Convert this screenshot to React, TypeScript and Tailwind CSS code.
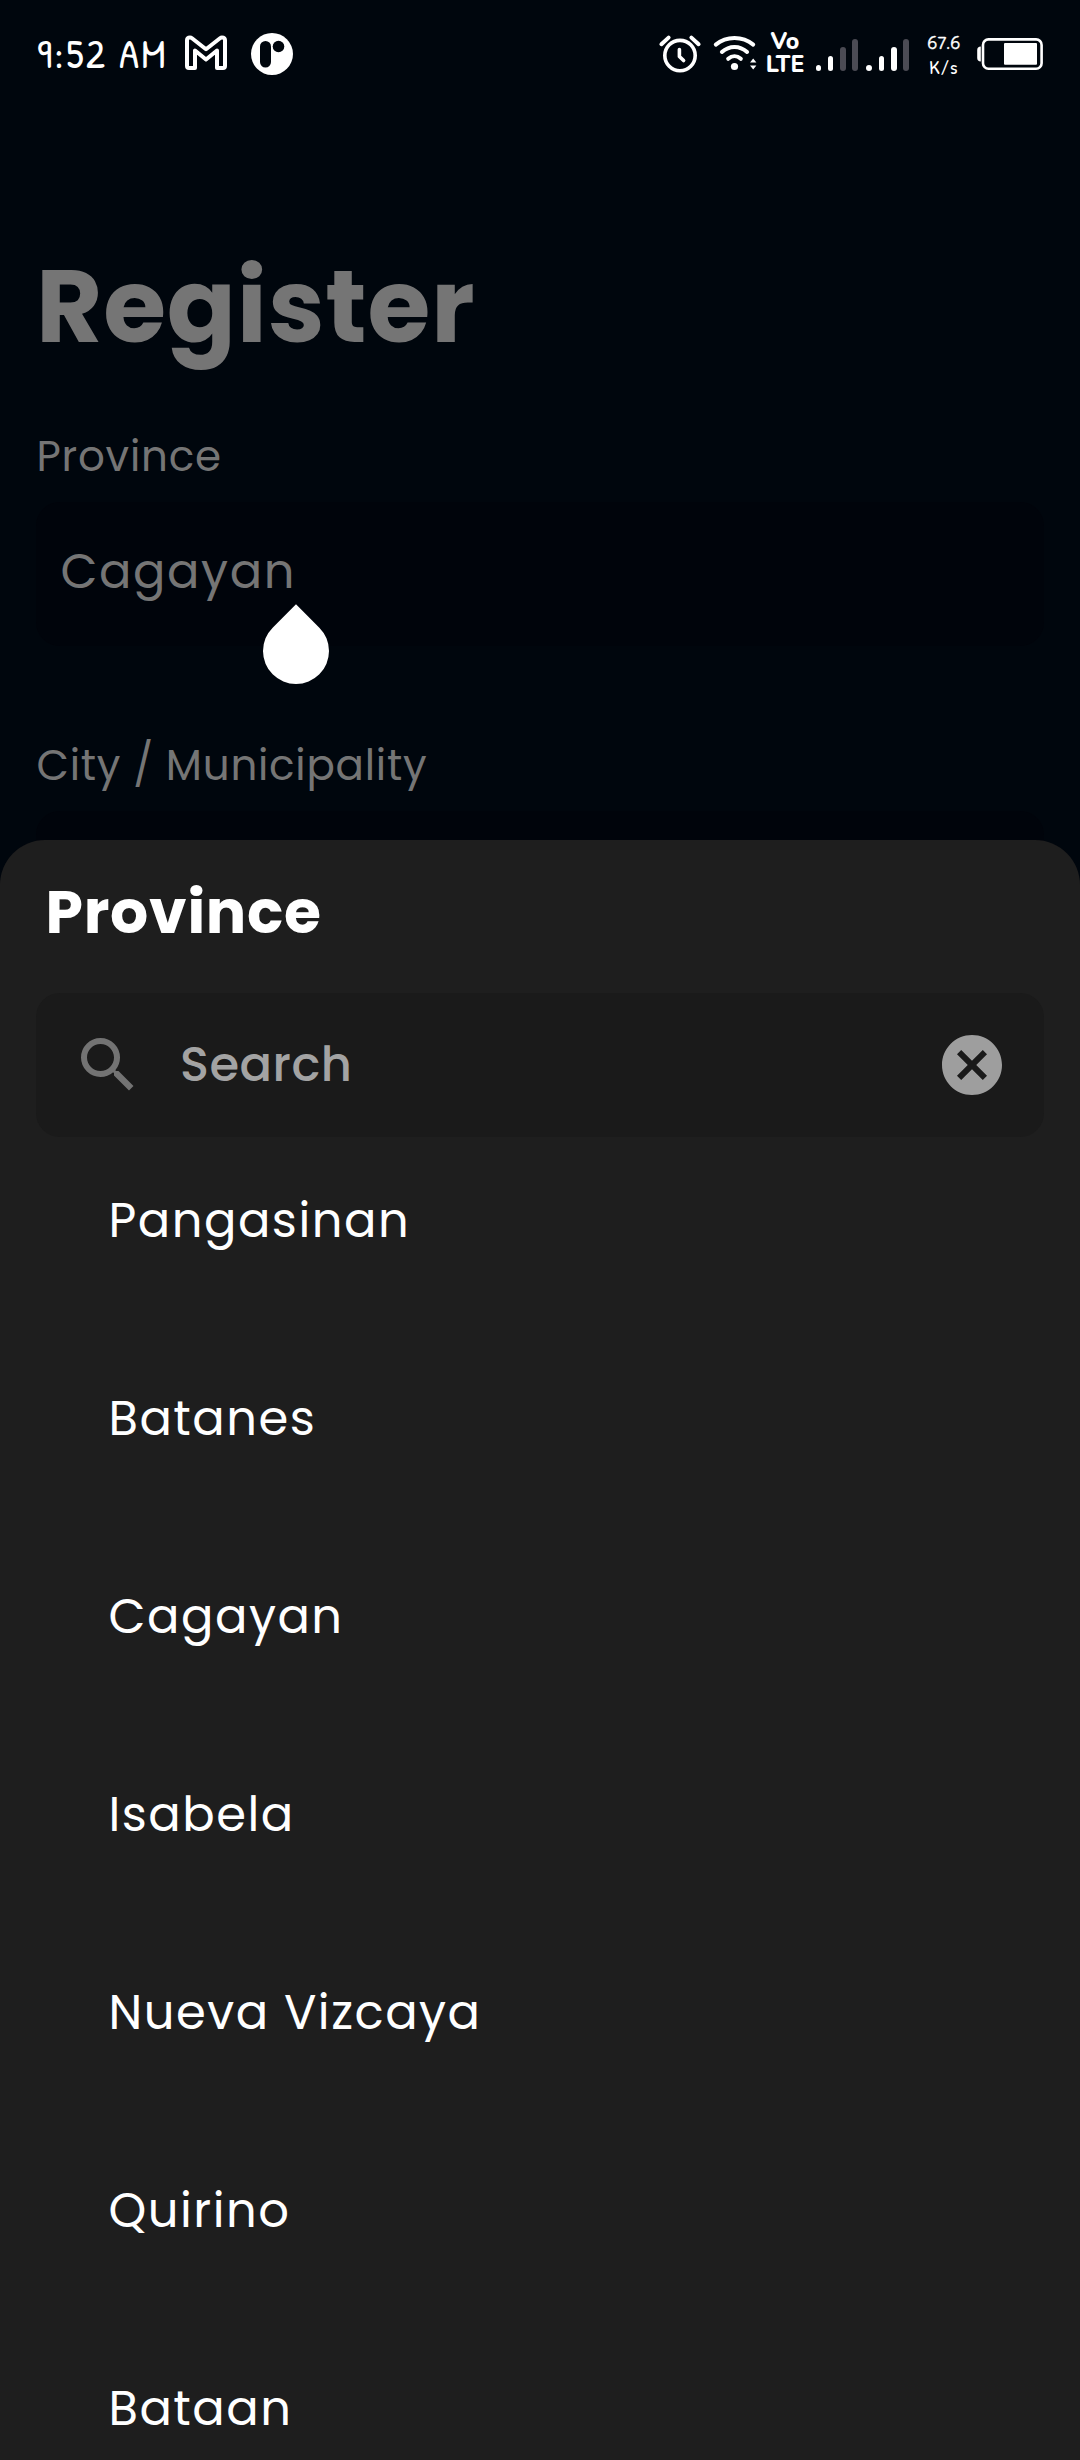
const provinces = ["Pangasinan", "Batanes", "Cagayan", "Isabela", "Nueva Vizcaya", "Quirino", "Bataan"];

function GmailIcon() {
  return (
    <svg className="h-[36px] w-[44px]" viewBox="0 0 44 36" fill="none" stroke="#fff" strokeWidth="4" strokeLinejoin="round">
      <path d="M3 31V5.5C3 2.6 6 1.6 8 3.2L22 14.2L36 3.2C38 1.6 41 2.6 41 5.5V31Q41 33 39 33H33V15.5L22 24.5L11 15.5V33H5Q3 33 3 31Z" />
    </svg>
  );
}

function RoundAppIcon() {
  return (
    <svg className="size-[42px]" viewBox="0 0 42 42">
      <circle cx="21" cy="21" r="21" fill="#fff" />
      <rect x="9" y="8" width="11" height="26.5" rx="5.5" fill="#00060d" />
      <circle cx="27.5" cy="13.5" r="5.8" fill="#00060d" />
    </svg>
  );
}

function AlarmIcon() {
  return (
    <svg className="h-[40px] w-[44px]" viewBox="658 34 44 40" fill="none" stroke="#fff" strokeWidth="3.6" strokeLinecap="round">
      <circle cx="680" cy="55.6" r="15.2" />
      <path d="M661.4 44.2L668.6 37.6M698.6 44.2L691.4 37.6" strokeWidth="4" />
      <path d="M679.4 49.5V56.4L683.6 60.6" strokeLinejoin="round" />
    </svg>
  );
}

function WifiIcon() {
  return (
    <svg className="h-[40px] w-[46px]" viewBox="712 33 46 40" fill="none" stroke="#fff" strokeWidth="4" strokeLinecap="round">
      <path d="M715.8 44.6C726.5 35.8 742.5 35.8 753.2 44.6" />
      <path d="M721.9 52C729.3 45.2 739.7 45.2 747.1 52" />
      <path d="M728.2 58.8C732 55.4 737 55.4 740.8 58.8" />
      <circle cx="734.5" cy="66.5" r="3.6" fill="#fff" stroke="none" />
      <path d="M750 62.6L753.2 58.6L756.4 62.6ZM750 65.6L753.2 69.6L756.4 65.6Z" fill="#fff" stroke="none" />
    </svg>
  );
}

function SignalBars({ strength }: { strength: number }) {
  const heights = [6.5, 15.5, 24, 32.5];
  return (
    <div className="flex h-[33px] items-end gap-[6.4px]">
      {heights.map((h, i) => (
        <div
          key={h}
          className={i < strength ? "w-[5.8px] rounded-full bg-white" : "w-[5.8px] rounded-full bg-[#4b4b54]"}
          style={{ height: h }}
        />
      ))}
    </div>
  );
}

function BatteryIcon() {
  return (
    <svg className="h-[34px] w-[68px]" viewBox="976 37 68 34" fill="none">
      <path d="M980.8 46.5C978.4 46.5 977.2 48 977.2 50V58C977.2 60 978.4 61.5 980.8 61.5Z" fill="#fff" />
      <rect x="983" y="39.4" width="58.6" height="29.4" rx="5.5" stroke="#fff" strokeWidth="2.6" />
      <rect x="1004" y="43" width="33" height="21.8" rx="1" fill="#fff" />
    </svg>
  );
}

function StatusBar() {
  return (
    <header className="flex h-[110px] items-start pl-[37px] text-white">
      <span className="mt-[32px] w-[147px] whitespace-pre font-['Patrick_Hand','Delius',sans-serif] text-[41px] leading-[42px] tracking-[2.3px]">
        9:52 AM
      </span>
      <div className="mt-[35px]">
        <GmailIcon />
      </div>
      <div className="mt-[33px] ml-[23px]">
        <RoundAppIcon />
      </div>
      <div className="mt-[34px] ml-[365px]">
        <AlarmIcon />
      </div>
      <div className="mt-[33px] ml-[10px]">
        <WifiIcon />
      </div>
      <div className="mt-[30px] ml-[8px] flex w-[38px] flex-col items-center font-['Nunito',sans-serif] text-[23px] leading-[23px] font-extrabold">
        <span>Vo</span>
        <span>LTE</span>
      </div>
      <div className="mt-[38px] ml-[11.5px]">
        <SignalBars strength={2} />
      </div>
      <div className="mt-[38px] ml-[8.5px]">
        <SignalBars strength={3} />
      </div>
      <div className="mt-[31px] ml-[16px] flex w-[38px] flex-col items-center whitespace-pre text-[18px] leading-[24px]">
        <span className="font-['Delius',sans-serif] [-webkit-text-stroke:0.3px_white]">67.6</span>
        <span className="font-['Patrick_Hand',sans-serif] text-[20px] tracking-[0.8px]">K/s</span>
      </div>
      <div className="mt-[37px] ml-[13px]">
        <BatteryIcon />
      </div>
    </header>
  );
}

function RegisterForm() {
  return (
    <main className="px-[36px] text-[#757575]">
      <h1 className="mt-[122px] text-[102px] leading-[150px] font-bold tracking-[0.75px]">Register</h1>
      <label className="mt-[43px] block pl-[0.5px] text-[42px] leading-[64px] tracking-[0.75px]">Province</label>
      <div className="relative mt-[13px] h-[144px] rounded-[24px] bg-[#00040b] pt-[34px] pl-[24.5px] text-[48px] leading-[72px] tracking-[1.55px]">
        Cagayan
        <div className="absolute top-[116px] left-[227px] size-[66px] rotate-45 rounded-full rounded-tl-none bg-white" />
      </div>
      <label className="mt-[88px] block pl-[0.5px] text-[42px] leading-[64px] tracking-[0.75px]">City / Municipality</label>
      <div className="mt-[13px] h-[144px] rounded-[24px] bg-[#00040b]" />
    </main>
  );
}

function ProvinceSheet() {
  return (
    <section className="absolute inset-x-0 top-[840px] bottom-0 overflow-hidden rounded-t-[45px] bg-[#1e1e1e] px-[36px] pt-[27px] text-white">
      <h2 className="pl-[9.5px] text-[60px] leading-[90px] font-bold tracking-[0.75px]">Province</h2>
      <div className="mt-[36px] flex h-[144px] items-center rounded-[24px] bg-[#1a1a1a] px-[36px]">
        <svg className="size-[72px]" viewBox="0 0 24 24" fill="#737373">
          <path d="M15.5 14h-.79l-.28-.27A6.471 6.471 0 0 0 16 9.5 6.5 6.5 0 1 0 9.5 16c1.61 0 3.09-.59 4.23-1.57l.27.28v.79l5 4.99L20.49 19l-4.99-5zm-6 0C7.01 14 5 11.99 5 9.5S7.01 5 9.5 5 14 7.01 14 9.5 11.99 14 9.5 14z" />
        </svg>
        <span className="ml-[36px] flex-1 text-[48px] leading-[72px] font-medium tracking-[0.45px] text-[#a3a3a3]">Search</span>
        <svg className="size-[72px]" viewBox="0 0 24 24" fill="#9e9e9e">
          <path d="M12 2C6.47 2 2 6.47 2 12s4.47 10 10 10 10-4.47 10-10S17.53 2 12 2zm5 13.59L15.59 17 12 13.41 8.41 17 7 15.59 10.59 12 7 8.41 8.41 7 12 10.59 15.59 7 17 8.41 13.41 12 17 15.59z" />
        </svg>
      </div>
      <ul className="mt-[48px] pl-[72.5px] text-[48px] leading-[72px] tracking-[1.5px]">
        {provinces.map((name) => (
          <li key={name} className="h-[198px] last:h-[72px]">
            {name}
          </li>
        ))}
      </ul>
    </section>
  );
}

export default function App() {
  return (
    <div className="relative h-[2460px] w-[1080px] overflow-hidden bg-[#00060d] font-['Poppins','Inter',sans-serif]">
      <StatusBar />
      <RegisterForm />
      <ProvinceSheet />
    </div>
  );
}
